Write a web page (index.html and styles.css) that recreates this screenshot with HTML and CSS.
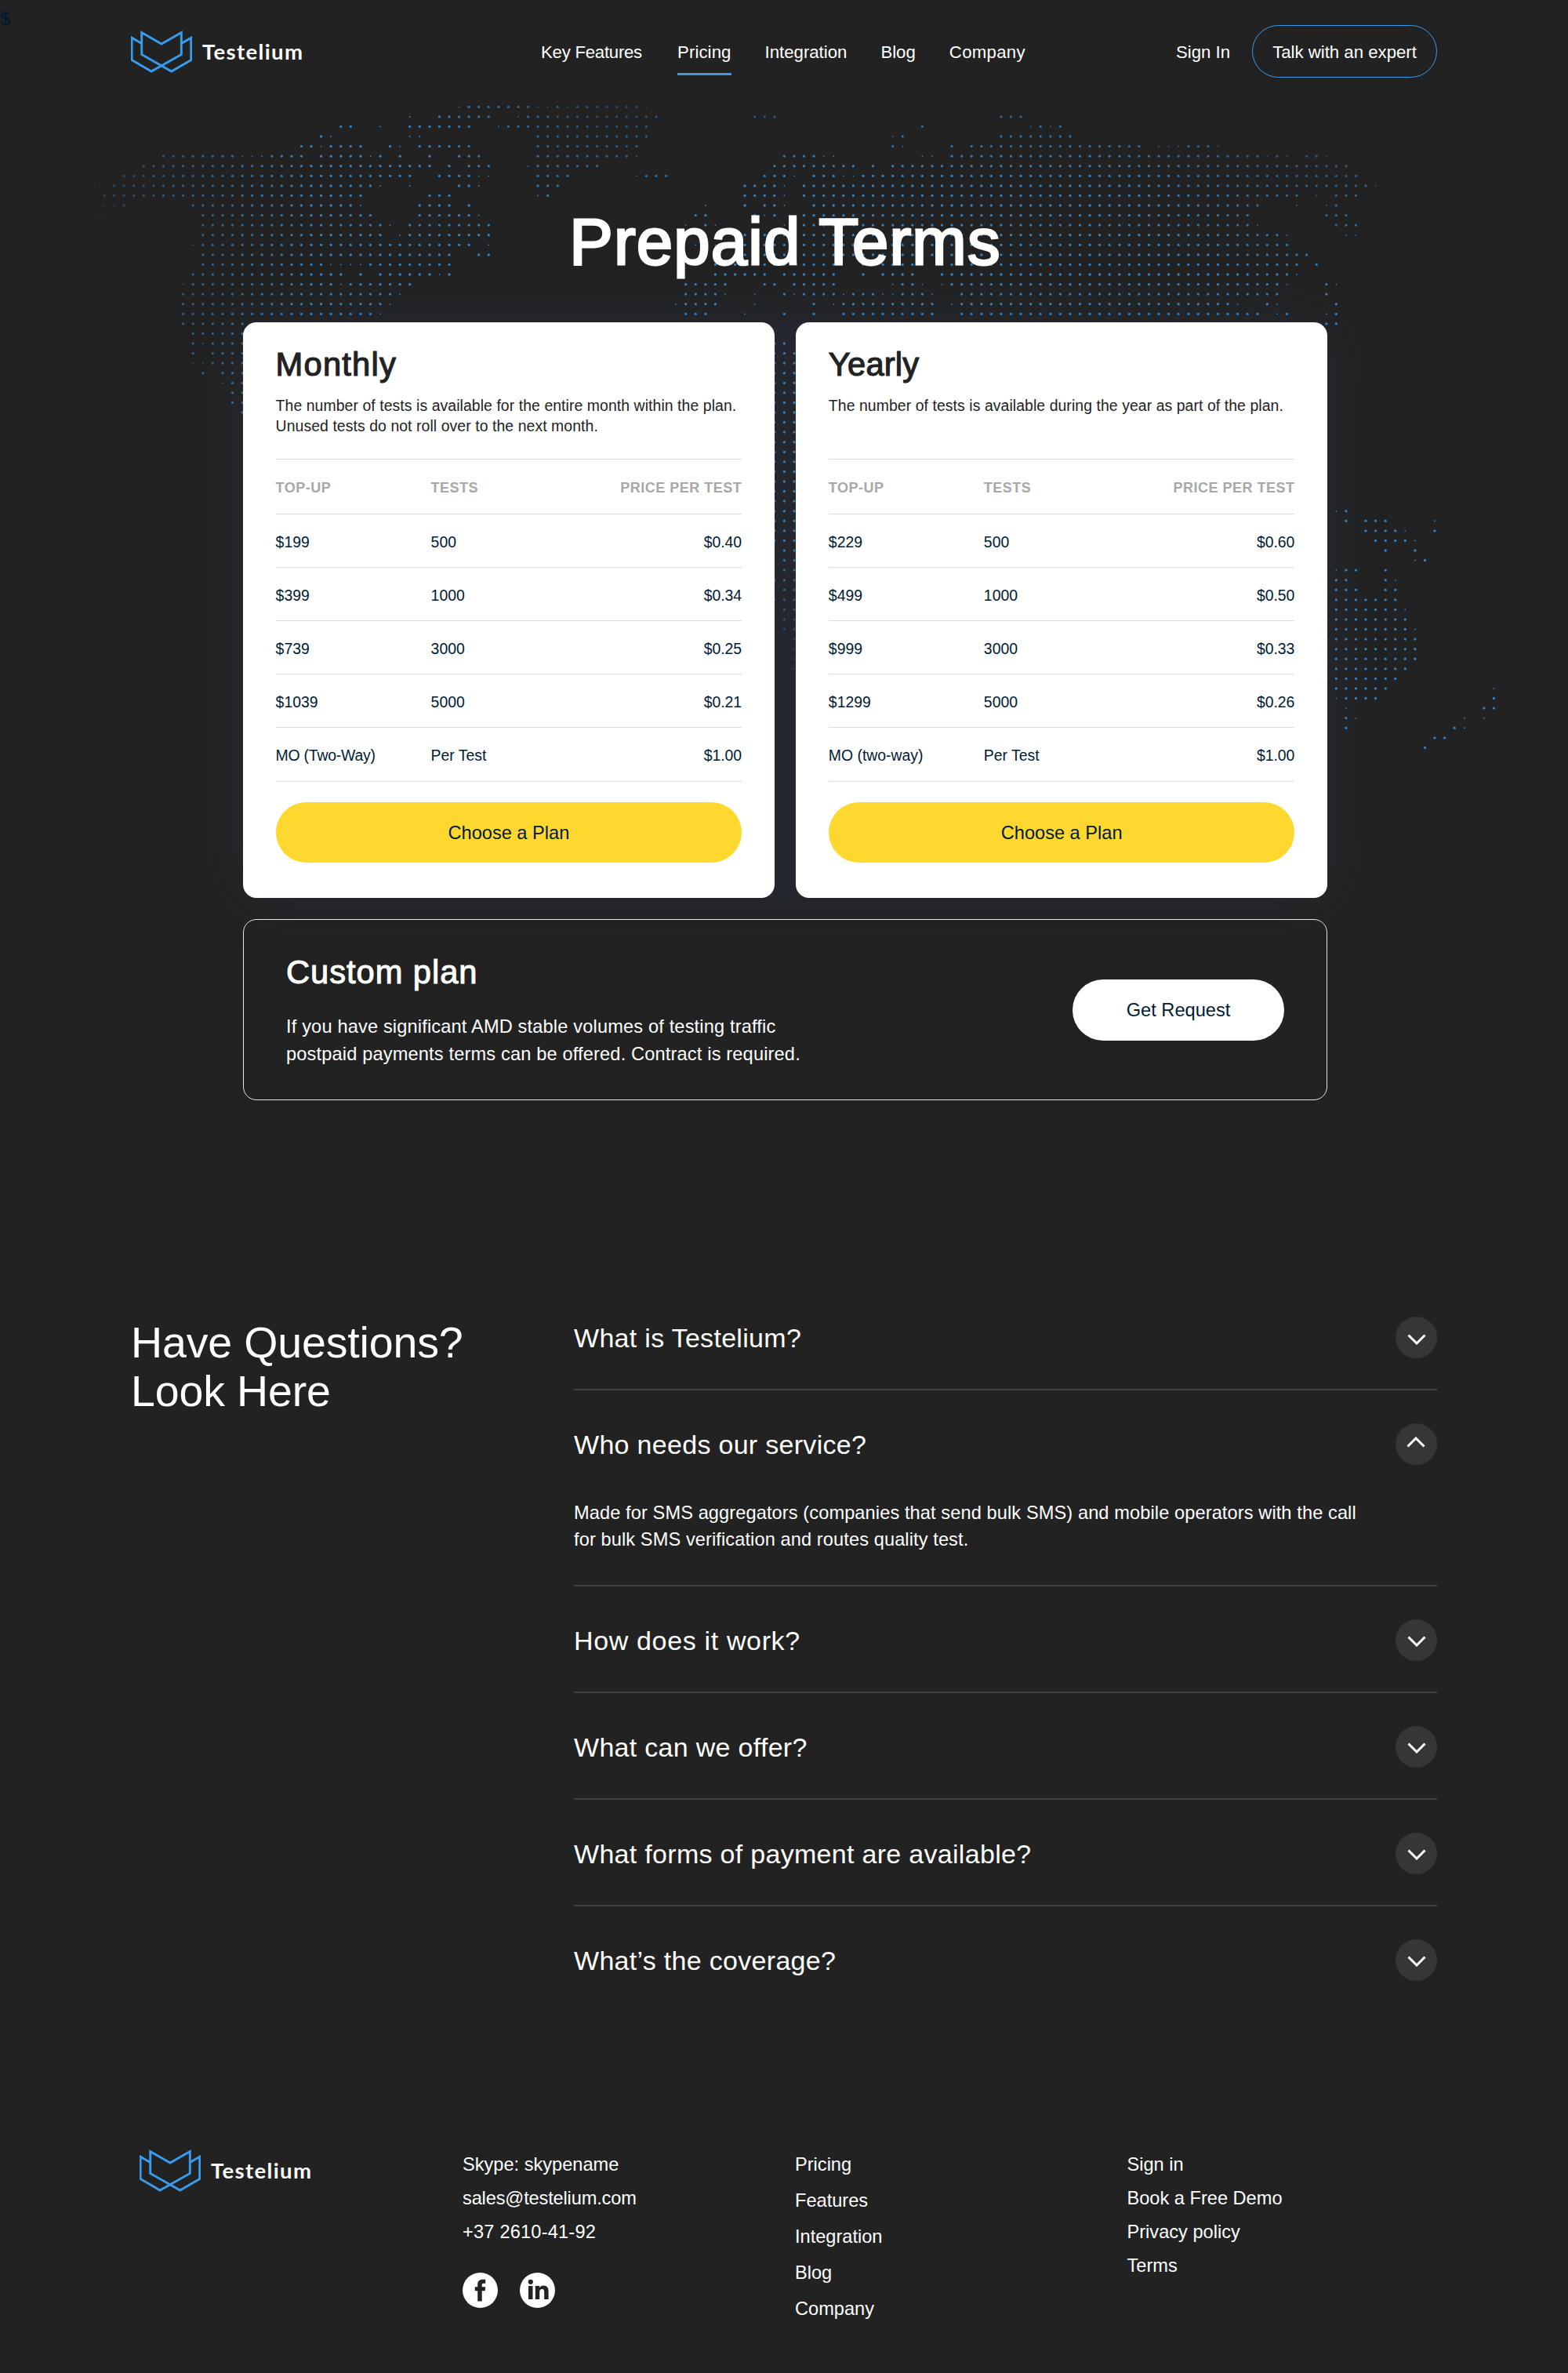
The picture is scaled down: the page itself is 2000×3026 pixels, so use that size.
FILE: index.html
```html
<!DOCTYPE html>
<html lang="en">
<head>
<meta charset="utf-8">
<title>Testelium – Pricing</title>
<link rel="stylesheet" href="styles.css">
</head>
<body>
<svg class="sprite" width="0" height="0" aria-hidden="true">
  <symbol id="mark" viewBox="0 0 78 54">
    <path d="M14.5 16.6 1.9 9.2v28.3l25 14.6 38.2-21.6V2.6L39.8 17 14.5 2.6v27.9l38 21.6 25-14.6V9.2l-12.4 7.4" transform="translate(-.8 0)" fill="none" stroke="#379cee" stroke-width="2.9"/>
  </symbol>
  <symbol id="chevron" viewBox="0 0 24 14">
    <path d="M1.5 1.5 12 12 22.500 1.500" fill="none" stroke="#fff" stroke-width="3"/>
  </symbol>
</svg>
<div class="page">
  <span class="currency">$</span>
  <svg class="map" id="map" width="2000" height="1000" aria-hidden="true"></svg>

  <header class="header">
    <a class="logo"><svg class="logo-mark"><use href="#mark"/></svg><span class="logo-name">Testelium</span></a>
    <nav class="nav">
      <a class="nav-link nav-link-first">Key Features</a>
      <a class="nav-link nav-link-active">Pricing</a>
      <a class="nav-link">Integration</a>
      <a class="nav-link">Blog</a>
      <a class="nav-link nav-link-last">Company</a>
    </nav>
    <a class="nav-link sign-in">Sign In</a>
    <a class="expert">Talk with an expert</a>
  </header>

  <main>
    <section class="pricing">
      <h1 class="title">Prepaid Terms</h1>
      <div class="plans">
        <article class="plan">
          <h2 class="plan-name">Monthly</h2>
          <p class="plan-text">The number of tests is available for the entire month within the plan.<br>Unused tests do not roll over to the next month.</p>
          <div class="rates">
            <div class="rate rate-head"><span>TOP-UP</span><span>TESTS</span><span>PRICE PER TEST</span></div>
            <div class="rate"><span>$199</span><span>500</span><span>$0.40</span></div>
            <div class="rate"><span>$399</span><span>1000</span><span>$0.34</span></div>
            <div class="rate"><span>$739</span><span>3000</span><span>$0.25</span></div>
            <div class="rate"><span>$1039</span><span>5000</span><span>$0.21</span></div>
            <div class="rate"><span class="rate-mo">MO (Two-Way)</span><span>Per Test</span><span>$1.00</span></div>
          </div>
          <a class="choose">Choose a Plan</a>
        </article>
        <article class="plan">
          <h2 class="plan-name plan-name-yearly">Yearly</h2>
          <p class="plan-text">The number of tests is available during the year as part of the plan.</p>
          <div class="rates">
            <div class="rate rate-head"><span>TOP-UP</span><span>TESTS</span><span>PRICE PER TEST</span></div>
            <div class="rate"><span>$229</span><span>500</span><span>$0.60</span></div>
            <div class="rate"><span>$499</span><span>1000</span><span>$0.50</span></div>
            <div class="rate"><span>$999</span><span>3000</span><span>$0.33</span></div>
            <div class="rate"><span>$1299</span><span>5000</span><span>$0.26</span></div>
            <div class="rate"><span>MO (two-way)</span><span>Per Test</span><span>$1.00</span></div>
          </div>
          <a class="choose">Choose a Plan</a>
        </article>
      </div>
      <article class="custom">
        <div>
          <h2 class="custom-name">Custom plan</h2>
          <p class="custom-text">If you have significant AMD stable volumes of testing traffic<br>postpaid payments terms can be offered. Contract is required.</p>
        </div>
        <a class="request">Get Request</a>
      </article>
    </section>

    <section class="faq">
      <h2 class="faq-title">Have Questions?<br>Look Here</h2>
      <div class="faq-list">
        <div class="faq-item"><h3 class="question">What is Testelium?</h3><span class="toggle"><svg class="chevron"><use href="#chevron"/></svg></span></div>
        <div class="faq-item faq-item-open"><h3 class="question">Who needs our service?</h3><span class="toggle toggle-open"><svg class="chevron"><use href="#chevron"/></svg></span>
          <p class="answer">Made for SMS aggregators (companies that send bulk SMS) and mobile operators with the call<br>for bulk SMS verification and routes quality test.</p></div>
        <div class="faq-item"><h3 class="question question-work">How does it work?</h3><span class="toggle"><svg class="chevron"><use href="#chevron"/></svg></span></div>
        <div class="faq-item"><h3 class="question">What can we offer?</h3><span class="toggle"><svg class="chevron"><use href="#chevron"/></svg></span></div>
        <div class="faq-item"><h3 class="question">What forms of payment are available?</h3><span class="toggle"><svg class="chevron"><use href="#chevron"/></svg></span></div>
        <div class="faq-item"><h3 class="question">What’s the coverage?</h3><span class="toggle"><svg class="chevron"><use href="#chevron"/></svg></span></div>
      </div>
    </section>
  </main>

  <footer class="footer">
    <a class="logo logo-footer"><svg class="logo-mark"><use href="#mark"/></svg><span class="logo-name">Testelium</span></a>
    <div class="footer-col footer-contacts">
      <span>Skype: skypename</span><span class="email">sales@testelium.com</span><span class="phone">+37 2610-41-92</span>
      <div class="social">
        <svg width="45" height="45" viewBox="0 0 45 45"><circle cx="22.500" cy="22.500" r="22.500" fill="#fff"/><path d="M19.200 36.500V23.200h-3.400v-5h3.400v-2.900c0-4.300 2-6.600 6.500-6.600h3.500v5.100h-2.400c-1.700 0-2.100.7-2.100 2.200v2.200h4.500l-.5 5h-4v13.300z" fill="#222"/></svg>
        <svg width="45" height="45" viewBox="0 0 45 45"><circle cx="22.500" cy="22.500" r="22.500" fill="#fff"/><path d="M11 17h5.500v17H11zM19.800 17h5.200v2.300c.8-1.500 2.600-2.700 5-2.700 5.200 0 6.600 3.100 6.600 7.800V34h-5.400v-8.600c0-2.200-.2-4.300-2.800-4.300s-3.200 1.900-3.200 4.300V34h-5.400z" fill="#222"/><circle cx="13.800" cy="11.800" r="3.100" fill="#222"/></svg>
      </div>
    </div>
    <div class="footer-col footer-nav"><span>Pricing</span><span>Features</span><span>Integration</span><span>Blog</span><span>Company</span></div>
    <div class="footer-col"><span>Sign in</span><span>Book a Free Demo</span><span>Privacy policy</span><span>Terms</span></div>
  </footer>
</div>
<script src="map.js"></script>
</body>
</html>
```
FILE: map.js
```js
// Dotted world map: one string per row, each entry a column or a column range.
// A trailing "s" marks a small dot on a coastline.
const rows = [
  "37s 38-44 45s 46s 47 48s 49-55 56s",
  "32s 35-40 43s 44-57 67-69 92-94",
  "25 26 29s 32-38 41s 42-56 84 95s 96 97s 98",
  "23 24s 32s 33s 45-56 81s 82 92-99",
  "21 22 23s 24-27 30 31s 33-38 45-55 81 82s 87 89-106 108s 109s 110s 111-113 114s",
  "7-14 15s 16s 17s 18-21 23-27 28s 29 31 34 37-39 45-54 55s 70-73 74s 75s 84s 85s 87-118 119s 120 121s 123 124 125s",
  "5-34 36 38-40 44s 45-51 69-77 79 81-127",
  "3-32 35-38 39s 40s 45-48 55s 56-58 68-70 71s 73-75 76s 77s 78-128",
  "0s 2-28 29s 32s 37 38 39s 45-47 66-69 70s 72-129 130s",
  "1-27 34-36 45s 46 66-69 70s 72-122 124s 126-128",
  "1s 2s 3 10-26 27s 33-36 38 62s 66 68 69 70s 73-118 122s 125s 126",
  "0s 1s 11-28 33-38 39s 61 62 67 68s 69 72-117 125-127",
  "11-29 30s 32-40 60s 62 63s 70s 72-117 118s 126-128",
  "11-29 31s 32-40 62 66 68 70 72-120 121s 127s 128s",
  "10s 11-38 40s 61s 63s 66-121",
  "11-36 39 40 66-123",
  "11-23 24s 25s 26s 27s 28-36 63-70 72-75 78-83 86-122 124",
  "10-25 27 29-34 35s 36 63-68 70-75 78 80-83 86-121 122s",
  "9s 10-24 25s 26-32 60-64 68 69 71-75 81s 82 83 84s 86s 87-120 121s 125 126s",
  "9-30 31s 60-63 64s 67s 70 71s 72-75 76s 77-79 80s 81s 82-84 85s 88-120 125",
  "9-29 30s 59s 60-63 67s 73 75s 76-85 87s 88-115 116s 119 120s 126",
  "9-28 29s 60-62 66s 70 73 76-85 88-118 120s 121 125s 126",
  "9-15 125 126", "10-15", "10 11s 12-15 69 70", "10 12-15 69-71", "10s 11s 12-15 69-71",
  "11 13-15 69-71", "13s 14 15 69-71", "14 15 69-71", "14 15 69-71", "15 69-71",
  "69-71", "69-71", "69-71", "69-71", "69-71", "69-71", "69-71", "69-71", "69-71",
  "69-71 126s 127", "69-71 127 129-131 136s", "69-71 129-132 133s 136", "69-71 130-133 134s",
  "70 71 131 134", "70 71 134s 135", "70 71 126s 127 128 131", "69-71 125-127 131 132s",
  "70 71 125-128 131 132", "69-71 125-132", "70 71 126-132 133s", "70 71 125-133",
  "70 71 125-133 134s", "71 125-134", "71 125-134", "71 125-134", "71 126-133", "125-132",
  "126-131 142s", "126s 127-130 142", "127s 141 142", "127 128s 139s 141s", "127 138 139s",
  "136 137", "135"
];
const step = 12.57;
const clamp = (v, lo, hi) => Math.max(lo, Math.min(hi, v));

// The dots fade out near the map's outer edge, over Greenland and at the bottom.
function alpha(x, y) {
  const west = clamp(0.35 + (x - 130) / 420, 0.3, 1);
  const north = clamp(0.38 + Math.hypot(x - 790, (y - 130) * 1.6) / 420, 0.3, 1);
  const east = y > 480 ? 1 : clamp(0.42 + Math.hypot(x - 1760, (y - 150) * 1.5) / 620, 0.3, 1);
  const top = y > 250 ? 1 : clamp(0.6 + (y - 130) / 240, 0.5, 1);
  const south = x > 980 && x < 1020 ? clamp((880 - y) / 200, 0.25, 1) : 1;
  return 0.8 * west * north * Math.max(east, 0.35) * (x > 900 ? top : 1) * south;
}

let dots = "";
rows.forEach((row, r) => {
  row.split(" ").forEach(entry => {
    const small = entry.endsWith("s");
    const [from, to = from] = entry.replace("s", "").split("-").map(Number);
    for (let c = from; c <= to; c++) {
      const x = 120.5 + step * c;
      const y = 136.3 + step * r;
      dots += `<circle cx="${x.toFixed(1)}" cy="${y.toFixed(1)}" r="${small ? 0.9 : 1.65}" fill-opacity="${alpha(x, y).toFixed(2)}"/>`;
    }
  });
});
document.getElementById("map").innerHTML = `<g fill="#379cee">${dots}</g>`;
```
FILE: styles.css
```css
* { box-sizing: border-box; }
body {
  margin: 0;
  background: #222;
  color: #fff;
  font-family: "Liberation Sans", Arial, sans-serif;
}
h1, h2, h3, p { margin: 0; font-weight: 400; }
.sprite { display: block; position: absolute; }
.page { position: relative; width: 2000px; height: 3026px; padding: 0 167px; overflow: hidden; }
.currency { position: absolute; left: 0; top: 10px; font-size: 23.6px; line-height: 28px; color: #001b33; }
.map { position: absolute; left: 0; top: 0; }

/* Header */
.header { position: relative; display: flex; align-items: center; height: 132px; }
.logo { display: flex; align-items: flex-start; width: 523px; height: 54px; }
.logo-mark { width: 78px; height: 54px; overflow: visible; }
.logo-name { margin-left: 13px; font: 700 27.5px/34px Lato, sans-serif; letter-spacing: 1.35px; padding-top: 10px; }
.nav { display: flex; align-items: flex-start; gap: 43px; width: 810px; }
.nav-link { padding-top: 2px; font-size: 22.2px; line-height: 28px; white-space: nowrap; }
.nav-link-first { width: 131px; letter-spacing: -.25px; }
.nav-link-active { margin-bottom: -15px; padding-bottom: 12px; border-bottom: 3px solid #379cee; letter-spacing: .1px; }
.nav-link-last { letter-spacing: .3px; }
.sign-in { flex: 1; }
.expert {
  display: flex; align-items: center; justify-content: center;
  width: 236px; height: 67px; margin-bottom: 2px; padding-top: 3px;
  border: 1.500px solid #379cee; border-radius: 34px; font-size: 22.2px; white-space: nowrap;
}

/* Pricing */
.pricing { position: relative; width: 1383px; margin: 127.400px 0 0 143px; }
.title { text-align: center; font-size: 83.300px; line-height: 100px; letter-spacing: 1.15px; -webkit-text-stroke: 2.800px #fff; }
.plans {
  display: grid; grid-template-columns: 1fr 1fr; gap: 27.500px; margin-top: 51.600px;
  border-radius: 17px; background: rgba(60, 80, 130, .12);
  box-shadow: 0 0 80px rgba(60, 80, 120, .2);
}
.plan {
  height: 733.700px; padding: 28.600px 41.600px 0; border-radius: 17px;
  background: #fff; color: #222;
}
.plan-name, .custom-name { font-size: 41.700px; line-height: 50px; }
.plan-name { letter-spacing: 1.200px; -webkit-text-stroke: 1.200px #222; }
.plan-name-yearly { letter-spacing: .2px; }
.plan-text { min-height: 52px; margin-top: 14px; font-size: 19.400px; line-height: 26px; letter-spacing: .08px; white-space: nowrap; }
.rates { margin-top: 29px; border-top: 1.500px solid #ddd; }
.rate {
  display: grid; grid-template-columns: 198px 1fr auto; align-items: center;
  height: 68.200px; padding-top: 4px; border-bottom: 1.500px solid #ddd;
  font-size: 19.400px; color: #001b33;
}
.rate-mo { letter-spacing: -.2px; }
.rate-head { height: 70px; color: #a8a8a8; font-size: 18px; font-weight: 700; letter-spacing: .5px; }
.choose {
  display: flex; align-items: center; justify-content: center; height: 77.800px; margin-top: 26px; padding-top: 2px;
  border-radius: 39px; background: #ffd82f; color: #001b33; font-size: 23.600px;
}
.custom {
  display: flex; justify-content: space-between; align-items: center;
  height: 231px; margin-top: 27.500px; padding: 0 54px;
  border: 1.500px solid #e6e6e6; border-radius: 17px;
}
.custom-name { padding-top: 1px; letter-spacing: .95px; -webkit-text-stroke: 1px #fff; }
.custom-text { margin-top: 27px; font-size: 23.600px; line-height: 34.700px; letter-spacing: .16px; white-space: nowrap; }
.request {
  display: flex; align-items: center; justify-content: center; width: 270px; height: 78px; padding-top: 2px;
  border-radius: 39px; background: #fff; color: #001b33; font-size: 23.600px;
}

/* Questions */
.faq { display: flex; margin-top: 234px; }
.faq-title { width: 565px; margin-top: 44px; font-size: 55.500px; line-height: 62px; letter-spacing: -.15px; }
.faq-list { flex: 1; }
.faq-item {
  display: grid; grid-template-columns: 1fr 53px; align-items: center;
  padding: 42px 0 39px; border-bottom: 2px solid #414141;
}
.faq-item-open { padding-bottom: 40.200px; }
.faq-item:last-child { border-bottom: 0; }
.question { padding-top: 2px; font-size: 34px; line-height: 51px; letter-spacing: .3px; }
.question-work { letter-spacing: .65px; }
.toggle { display: flex; align-items: center; justify-content: center; width: 53px; height: 53px; border-radius: 50%; background: #363636; }
.toggle-open { transform: rotate(180deg); }
.chevron { width: 24px; height: 14px; margin-top: 4px; }
.answer { grid-column: 1 / 3; margin-top: 44.200px; font-size: 23.600px; line-height: 34px; letter-spacing: .1px; }

/* Footer */
.footer { display: flex; margin-top: 177px; }
.logo-footer { width: 412px; margin: -1px 0 0 11px; }
.footer-col { display: flex; flex-direction: column; gap: 15px; font-size: 23.600px; line-height: 28px; margin-top: 4px; }
.footer-contacts { width: 424px; }
.footer-nav { width: 423.500px; gap: 18px; }
.email { letter-spacing: -.15px; }
.phone { letter-spacing: .2px; }
.social { display: flex; gap: 27.500px; margin-top: 23px; }
```
